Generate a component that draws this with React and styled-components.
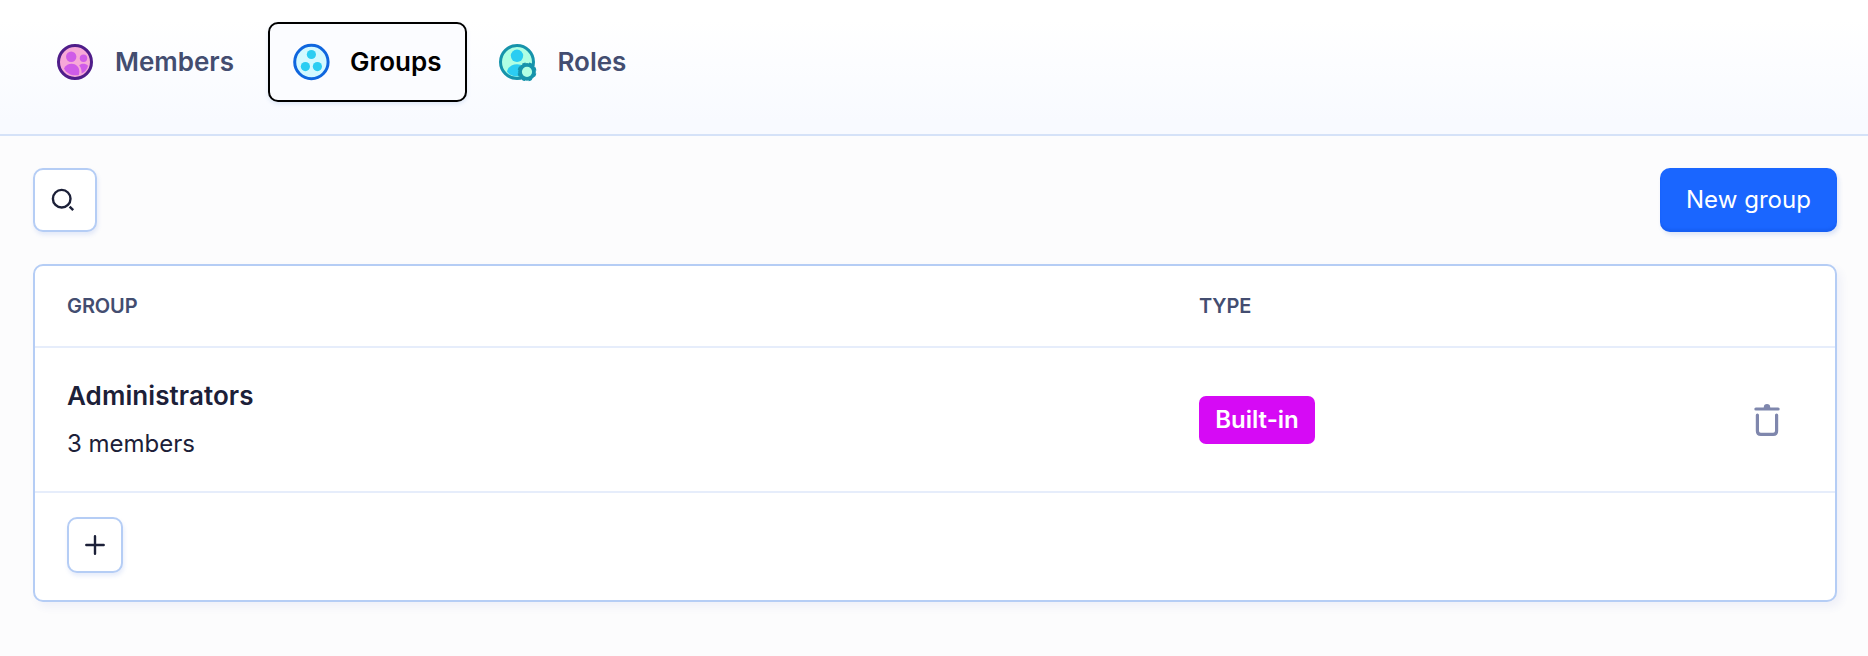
import styled, { createGlobalStyle } from 'styled-components';
import { useState } from 'react';

const tabs = [
  { label: 'Members', Icon: MembersIcon },
  { label: 'Groups', Icon: GroupsIcon },
  { label: 'Roles', Icon: RolesIcon },
];

const groups = [{ name: 'Administrators', members: 3, type: 'Built-in' }];

function MembersIcon() {
  return (
    <svg width="40" height="40" viewBox="0 0 40 40">
      <circle cx="20" cy="20" r="16.5" fill="#f7a8d8" stroke="#4f1d8a" strokeWidth="3" />
      <circle cx="16.2" cy="14.7" r="5.2" fill="#cf5ce8" />
      <circle cx="28.5" cy="16.3" r="3.7" fill="#cf5ce8" />
      <path
        d="M9 26.4C10.8 23.2 13.6 21.8 16.6 21.8C20.9 21.8 24.3 25 24.3 29.2C24.3 30.8 24.2 32 23.8 33C17.6 34.4 11.6 31.6 9 26.4Z"
        fill="#cf5ce8"
      />
      <path
        d="M24.2 23.4C26 21.2 30.6 21.2 33 23.8C32.4 27.4 29.8 30.4 26.6 31.4C26.8 28.6 26.2 25.6 24.2 23.4Z"
        fill="#cf5ce8"
      />
    </svg>
  );
}

function GroupsIcon() {
  return (
    <svg width="40" height="40" viewBox="0 0 40 40">
      <circle cx="21.4" cy="20" r="16.7" fill="#d3f9ff" stroke="#0f66de" strokeWidth="3" />
      <circle cx="21.4" cy="12.5" r="4.6" fill="#2bcdf2" />
      <circle cx="15.4" cy="24.6" r="4.6" fill="#2bcdf2" />
      <circle cx="27.4" cy="24.6" r="4.6" fill="#2bcdf2" />
    </svg>
  );
}

function RolesIcon() {
  return (
    <svg width="40" height="40" viewBox="0 0 40 40">
      <circle cx="20" cy="20" r="16.5" fill="#b0ffe3" stroke="#1693ab" strokeWidth="3" />
      <circle cx="20" cy="13.8" r="6.2" fill="#2bcdf2" />
      <path
        d="M10 29.8C10.8 25.2 14.8 22.2 20 22.2C25.2 22.2 29 25 30 29.8C27.4 33.2 23.8 34.4 20 34.4C16 34.4 12.4 33 10 29.8Z"
        fill="#2bcdf2"
      />
      <circle cx="30" cy="29.8" r="7" fill="#b0ffe3" stroke="#1693ab" strokeWidth="3.8" />
      <circle
        cx="30"
        cy="29.8"
        r="8.6"
        fill="none"
        stroke="#1693ab"
        strokeWidth="1.8"
        strokeDasharray="3.38 3.38"
        strokeDashoffset="5.07"
      />
    </svg>
  );
}

function SearchIcon() {
  return (
    <svg width="28" height="24" viewBox="0 0 28 24" fill="none" stroke="#1c2038" strokeWidth="2.4">
      <circle cx="10.7" cy="10.7" r="8.8" />
      <path d="M18.6 18.6L22.2 22.2" />
    </svg>
  );
}

function PlusIcon() {
  return (
    <svg width="20" height="20" viewBox="0 0 20 20" stroke="#1c2038" strokeWidth="2.4" strokeLinecap="round">
      <path d="M10 1.3V18.7M1.3 10H18.7" />
    </svg>
  );
}

function TrashIcon() {
  return (
    <svg width="26" height="34" viewBox="0 0 26 34" fill="none" stroke="#7f87ad" strokeWidth="3.2" strokeLinecap="round">
      <path d="M1.9 6H24.1" />
      <path d="M9.8 5.5V4.2C9.8 2.2 11 1 13 1C15 1 16.2 2.2 16.2 4.2V5.5Z" fill="#7f87ad" stroke="none" />
      <path d="M3.4 12V28C3.4 30.2 4.8 31.4 6.8 31.4H19.2C21.2 31.4 22.6 30.2 22.6 28V12" />
    </svg>
  );
}

function App() {
  const [activeTab, setActiveTab] = useState('Groups');

  return (
    <Page>
      <GlobalStyle />
      <Header>
        {tabs.map(({ label, Icon }) => (
          <Tab key={label} $active={activeTab === label} onClick={() => setActiveTab(label)}>
            <Icon />
            <span>{label}</span>
          </Tab>
        ))}
      </Header>
      <Content>
        <Toolbar>
          <IconButton $size={64} aria-label="Search">
            <SearchIcon />
          </IconButton>
          <PrimaryButton>New group</PrimaryButton>
        </Toolbar>
        <Table>
          <HeadRow>
            <span>Group</span>
            <span>Type</span>
          </HeadRow>
          {groups.map((group) => (
            <Row key={group.name}>
              <div>
                <GroupName>{group.name}</GroupName>
                <GroupCount>{group.members} members</GroupCount>
              </div>
              <Badge>{group.type}</Badge>
              <DeleteButton aria-label="Delete">
                <TrashIcon />
              </DeleteButton>
            </Row>
          ))}
          <FootRow>
            <IconButton $size={56} aria-label="Add">
              <PlusIcon />
            </IconButton>
          </FootRow>
        </Table>
      </Content>
    </Page>
  );
}

// -------------------------------------------------- styling ----------------------------------------------
const GlobalStyle = createGlobalStyle`
  *, *::before, *::after {
    box-sizing: border-box;
  }

  body {
    margin: 0;
    font-family: Inter, sans-serif;
    color: #1c2038;
  }

  button {
    font-family: inherit;
    padding: 0;
    cursor: pointer;
  }

  svg {
    display: block;
    flex-shrink: 0;
  }
`;

const Page = styled.div`
  min-height: 100vh;
  background: #fcfcfd;
`;

const Header = styled.header`
  display: flex;
  gap: 8px;
  height: 136px;
  padding: 22px 33px 0;
  border-bottom: 2px solid #d5e2f8;
  background: linear-gradient(to bottom, #fff 15%, #f8faff 90%);
`;

const Tab = styled.button`
  display: flex;
  align-items: center;
  gap: 20px;
  height: 80px;
  padding: 0 24px 0 20px;
  border: 2px solid ${({ $active }) => ($active ? '#000' : 'transparent')};
  border-radius: 10px;
  background: ${({ $active }) => ($active ? '#fbfcff' : 'transparent')};
  box-shadow: ${({ $active }) => ($active ? '0 2px 4px rgba(60, 110, 200, 0.14)' : 'none')};
  color: ${({ $active }) => ($active ? '#000' : '#434d70')};
  font-size: 26px;
  font-weight: 600;
  line-height: 32px;
`;

const Content = styled.main`
  padding: 32px 31px 54px 33px;
`;

const Toolbar = styled.div`
  display: flex;
  justify-content: space-between;
  margin-bottom: 32px;
`;

const IconButton = styled.button`
  display: flex;
  align-items: center;
  justify-content: center;
  width: ${({ $size }) => $size}px;
  height: ${({ $size }) => $size}px;
  border: 2px solid #b5cdf5;
  border-radius: 10px;
  background: #fff;
  box-shadow: 1px 3px 4px rgba(60, 110, 220, 0.13);
`;

const PrimaryButton = styled.button`
  width: 177px;
  height: 64px;
  padding-bottom: 2px;
  border: none;
  border-radius: 10px;
  background: #1a66ff;
  box-shadow: 2px 3px 4px rgba(60, 110, 220, 0.16), inset 0 -3px 2px rgba(10, 70, 200, 0.2);
  color: #fff;
  font-size: 24px;
  font-weight: 400;
  letter-spacing: 0.05px;
`;

const Table = styled.section`
  border: 2px solid #b5cdf5;
  border-radius: 10px;
  background: #fff;
  box-shadow: 4px 5px 8px rgba(70, 90, 180, 0.07);
`;

const HeadRow = styled.div`
  display: grid;
  grid-template-columns: 1132px 1fr;
  align-items: center;
  height: 82px;
  padding: 0 32px;
  border-bottom: 2px solid #e6edfb;
  color: #434d70;
  font-size: 20px;
  font-weight: 600;
  letter-spacing: -0.1px;
  text-transform: uppercase;
`;

const Row = styled.div`
  display: grid;
  grid-template-columns: 1132px 1fr auto;
  align-items: center;
  height: 145px;
  padding: 0 32px;
  border-bottom: 2px solid #e6edfb;
`;

const GroupName = styled.div`
  margin-bottom: 16px;
  font-size: 26px;
  font-weight: 600;
  line-height: 32px;
  letter-spacing: 0.08px;
`;

const GroupCount = styled.div`
  font-size: 24px;
  line-height: 32px;
`;

const Badge = styled.span`
  justify-self: start;
  width: 116px;
  height: 48px;
  border-radius: 7px;
  background: #d60af5;
  color: #fff;
  font-size: 24px;
  font-weight: 600;
  line-height: 48px;
  text-align: center;
`;

const DeleteButton = styled.button`
  margin-right: 23px;
  border: none;
  background: none;
`;

const FootRow = styled.div`
  padding: 24px 32px 27px;
`;

export default App;
